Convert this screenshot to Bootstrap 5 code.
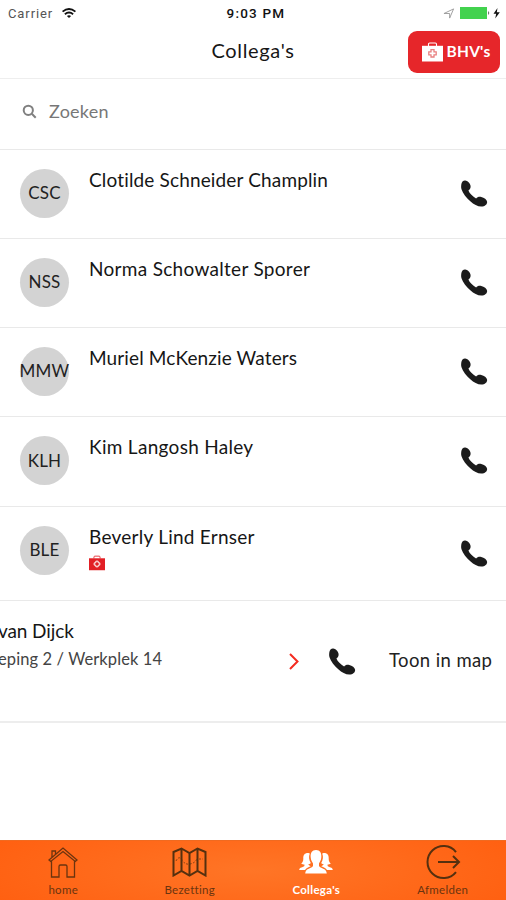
<!DOCTYPE html>
<html lang="nl">
<head>
<meta charset="utf-8">
<meta name="viewport" content="width=device-width, initial-scale=1">
<title>Collega's</title>
<link href="https://cdn.jsdelivr.net/npm/bootstrap@5.3.0/dist/css/bootstrap.min.css" rel="stylesheet">
<style>
body{font-family:Lato,"Liberation Sans",sans-serif;color:#161616;background:#fff}
svg{display:block;flex:none}
.phone-screen{height:900px;overflow:hidden}
.status-bar{height:26px;font:13px/27px Roboto,sans-serif;padding:0 5px 0 8px}
.status-bar>div{flex:1}
.carrier{color:#555;letter-spacing:.9px}
.clock{font-size:13.5px;letter-spacing:1.2px;color:#111;padding-left:3px}
.title-bar{height:53px;border-bottom:1px solid #eee;padding-right:6px}
.title-bar>div{flex:1}
.title-bar h1{font-size:20px;letter-spacing:.65px;line-height:24px;padding:0 0 4px 6px}
.btn-bhv{width:92px;height:42px;background:#e6262a;color:#fff;border-radius:9px;font-size:15.5px;font-weight:700;letter-spacing:.2px}
.search{height:70.5px;border-bottom:1px solid #e9e9e9;padding:0 0 4px 22px;color:#777;font-size:18px;letter-spacing:.25px}
.person{height:89.3px;border-bottom:1px solid #e9e9e9;padding:0 18px 0 20px}
.person.tall{height:94.5px}
.avatar{width:49px;height:49px;background:#d3d3d3;font-size:17px;margin-top:19px;padding-bottom:1px;color:#222;letter-spacing:.2px}
.person-name{font-size:19px;line-height:24px;margin:18px 0 0 20px}
.ls-a{letter-spacing:.15px}.ls-b{letter-spacing:.3px}.ls-c{letter-spacing:.13px}.ls-d{letter-spacing:.25px}
.person .handset{margin-top:30px}
.person.tall .handset{margin-top:33px}
.kit-mark{color:#e21f25;--cross:#fff;margin-top:6px}
.swiped{height:122px;border-bottom:2px solid #ededed}
.swiped .who{width:289px;font-size:19px;line-height:24px;padding-top:18px}
.swiped .who>div:first-child{margin-left:-2px;letter-spacing:-.1px}
.swiped .place{font-size:16.5px;line-height:24px;color:#444;margin:4px 0 0 -2px;letter-spacing:.1px}
.swiped .handset{margin-left:29px}
.map-link{font-size:18.5px;letter-spacing:.4px;color:#222;margin-left:33px}
.tabs{height:60px;background:radial-gradient(ellipse 60% 110% at 50% 50%,#ff7526,#ff5f10);border-top:1px solid #f06a20;font-size:11.5px;color:#6b340f}
.tabs a{flex:1;color:inherit;text-decoration:none;line-height:14px;letter-spacing:.3px}
.tabs .pic{height:42px}
.tabs a.active{color:#fff;font-weight:700}
</style>
</head>
<body>
<svg width="0" height="0" class="position-absolute">
<symbol id="handset" viewBox="0 0 27 27"><path fill="#1b1b1b" d="M.8 4.5C1 2 2.8.3 4.8.5C6.8.6 9.8 3.2 10.1 6C10.3 8.2 9.3 9.6 7.9 10.6C9 13.4 12.2 16.6 15.6 18.6C16.8 16.9 18.9 16.4 20.8 17C23.6 17.8 26.4 19.6 26.6 21.8C26.9 24.4 24.4 26.5 20.8 26.6C17 26.6 13.3 24.3 9.8 21.2C5.8 17.6 2.2 13.2 1 9.2C.5 7.6.6 6 .8 4.5Z"/></symbol>
<symbol id="kit" viewBox="0 0 21 20"><path d="M6.5 4V2.2Q6.5 1 7.7 1H13.3Q14.5 1 14.5 2.2V4" fill="none" stroke="currentColor" stroke-width="1.1"/><path d="M0 3.8H21V19.5H0Z" fill="currentColor"/><path d="M9 7.6H12V9.8H14.2V12.8H12V15H9V12.8H6.8V9.8H9Z" fill="none" stroke="var(--cross)" stroke-width="1.3"/></symbol>
</svg>
<div class="phone-screen d-flex flex-column">
<div class="status-bar d-flex">
<div class="carrier d-flex align-items-center gap-1"><span>Carrier</span>
<svg class="ms-1" width="16" height="11" viewBox="0 0 17 12" fill="none" stroke="#111" stroke-width="2"><path d="M1.5 4Q8.5-1.8 15.5 4M4 6.8Q8.5 3 13 6.8"/><path d="M6.2 8.7Q8.5 7 10.8 8.7L8.5 11Z" fill="#111" stroke="none"/></svg></div>
<div class="clock text-center fw-medium">9:03 PM</div>
<div class="d-flex align-items-center justify-content-end">
<svg width="12" height="11" viewBox="0 0 13 12" fill="none" stroke="#999"><path d="M1 6L11.5 1L7.2 11V6Z"/></svg>
<svg class="ms-1" width="42" height="12" viewBox="0 0 42 12"><path d="M1 0H28V12H1Z" fill="#42d24e"/><path d="M29 4Q31.5 6 29 8Z" fill="#777"/><path d="M38.5 1L34.5 6.7H37.2L36.2 11.5L40.8 5.3H37.8Z" fill="#111"/></svg></div>
</div>
<header class="title-bar d-flex align-items-center"><div></div><h1 class="m-0 fw-normal">Collega's</h1><div class="d-flex justify-content-end">
<button class="btn btn-bhv p-0 d-flex align-items-center justify-content-center gap-1"><svg class="ms-1" width="21" height="20" style="--cross:#e98080"><use href="#kit"/></svg><span>BHV's</span></button></div></header>
<div class="search d-flex align-items-center"><svg width="15" height="15" viewBox="0 0 15 15" fill="none" stroke="#808080" stroke-width="2"><circle cx="6.3" cy="6.3" r="4.6"/><path d="M9.8 9.8L13.7 13.7"/></svg><span class="ms-2 ps-1">Zoeken</span></div>
<main class="flex-grow-1">
<div class="person d-flex"><div class="avatar rounded-circle d-flex align-items-center justify-content-center"><span>CSC</span></div><div class="person-name ls-a">Clotilde Schneider Champlin</div><svg class="handset ms-auto" width="28" height="27"><use href="#handset"/></svg></div>
<div class="person d-flex"><div class="avatar rounded-circle d-flex align-items-center justify-content-center"><span>NSS</span></div><div class="person-name ls-b">Norma Schowalter Sporer</div><svg class="handset ms-auto" width="28" height="27"><use href="#handset"/></svg></div>
<div class="person d-flex"><div class="avatar rounded-circle d-flex align-items-center justify-content-center"><span>MMW</span></div><div class="person-name ls-c">Muriel McKenzie Waters</div><svg class="handset ms-auto" width="28" height="27"><use href="#handset"/></svg></div>
<div class="person d-flex"><div class="avatar rounded-circle d-flex align-items-center justify-content-center"><span>KLH</span></div><div class="person-name ls-b">Kim Langosh Haley</div><svg class="handset ms-auto" width="28" height="27"><use href="#handset"/></svg></div>
<div class="person tall d-flex"><div class="avatar rounded-circle d-flex align-items-center justify-content-center"><span>BLE</span></div><div class="person-name ls-d">Beverly Lind Ernser<svg class="kit-mark" width="16" height="16"><use href="#kit"/></svg></div><svg class="handset ms-auto" width="28" height="27"><use href="#handset"/></svg></div>
<div class="swiped d-flex"><div class="who text-nowrap"><div>van Dijck</div><div class="place">eping 2 / Werkplek 14</div></div>
<div class="d-flex align-items-center"><svg width="10" height="17" viewBox="0 0 10 17" fill="none" stroke="#f42b20" stroke-width="2"><path d="M1 1L8.5 8.5L1 16"/></svg><svg class="handset" width="28" height="27"><use href="#handset"/></svg><span class="map-link">Toon in map</span></div></div>
</main>
<nav class="tabs d-flex text-center">
<a href="#"><div class="pic d-flex align-items-center justify-content-center"><svg width="30" height="31" viewBox="0 0 30 31" fill="none" stroke="#6b340f" stroke-width="1.3"><path d="M1 13L15 1L29 13L27.3 14.5L15 4.5L2.7 14.5ZM3.5 14V30H11V19.5Q11 18 12.5 18H17.5Q19 18 19 19.5V30H26.5V14M4 10V4H7.5V7"/></svg></div>home</a>
<a href="#"><div class="pic d-flex align-items-center justify-content-center"><svg width="35" height="30" viewBox="0 0 35 30" fill="none" stroke="#55300f" stroke-width="2"><path d="M1.5 5L9.5 1.5L17.5 6L25.5 1.5L33.5 5V28.5L25.5 24L17.5 28.5L9.5 24L1.5 28.5ZM9.5 1.5V24M17.5 6V28.5M25.5 1.5V24"/><path d="M4 14Q7 8 10 13T18 17T25 12M27 12H31" stroke-width="1" stroke-dasharray="2 1.5" opacity=".7"/></svg></div>Bezetting</a>
<a href="#" class="active"><div class="pic d-flex align-items-center justify-content-center"><svg width="34" height="24" viewBox="0 0 34 24" fill="#fff"><path d="M17 0C21 0 22.8 3 22.3 7.5C22.1 10.5 20.8 12 20 13.5V16C21 18.5 27.5 18 27.8 23.5H6.2C6.5 18 13 18.5 14 16V13.5C13.2 12 11.9 10.5 11.7 7.5C11.2 3 13 0 17 0Z"/><path id="side" d="M9.5 3C6 2.7 4 4.8 4.3 8.5C4.4 11 3.5 12.5 2.2 13.5C3.2 14.4 4.3 14.5 5.4 14.6V16C4 17.5.5 17 .2 20H6C7.5 17.5 10.5 17 11.7 16.2C10.5 15.5 9.5 15 9.3 14.2C11 14 11.5 13.5 11.8 13C10 10 9.5 6.5 10.8 3.4Z"/><use href="#side" transform="matrix(-1 0 0 1 34 0)"/></svg></div>Collega's</a>
<a href="#"><div class="pic d-flex align-items-center justify-content-center"><svg width="36" height="36" viewBox="0 0 36 36" fill="none" stroke="#55300f" stroke-width="2"><path d="M31 8A16 16 0 1 0 31 28M13 18H34M28 12L34 18L28 24"/></svg></div>Afmelden</a>
</nav>
</div>
<script src="https://cdn.jsdelivr.net/npm/bootstrap@5.3.0/dist/js/bootstrap.bundle.min.js"></script>
</body>
</html>
